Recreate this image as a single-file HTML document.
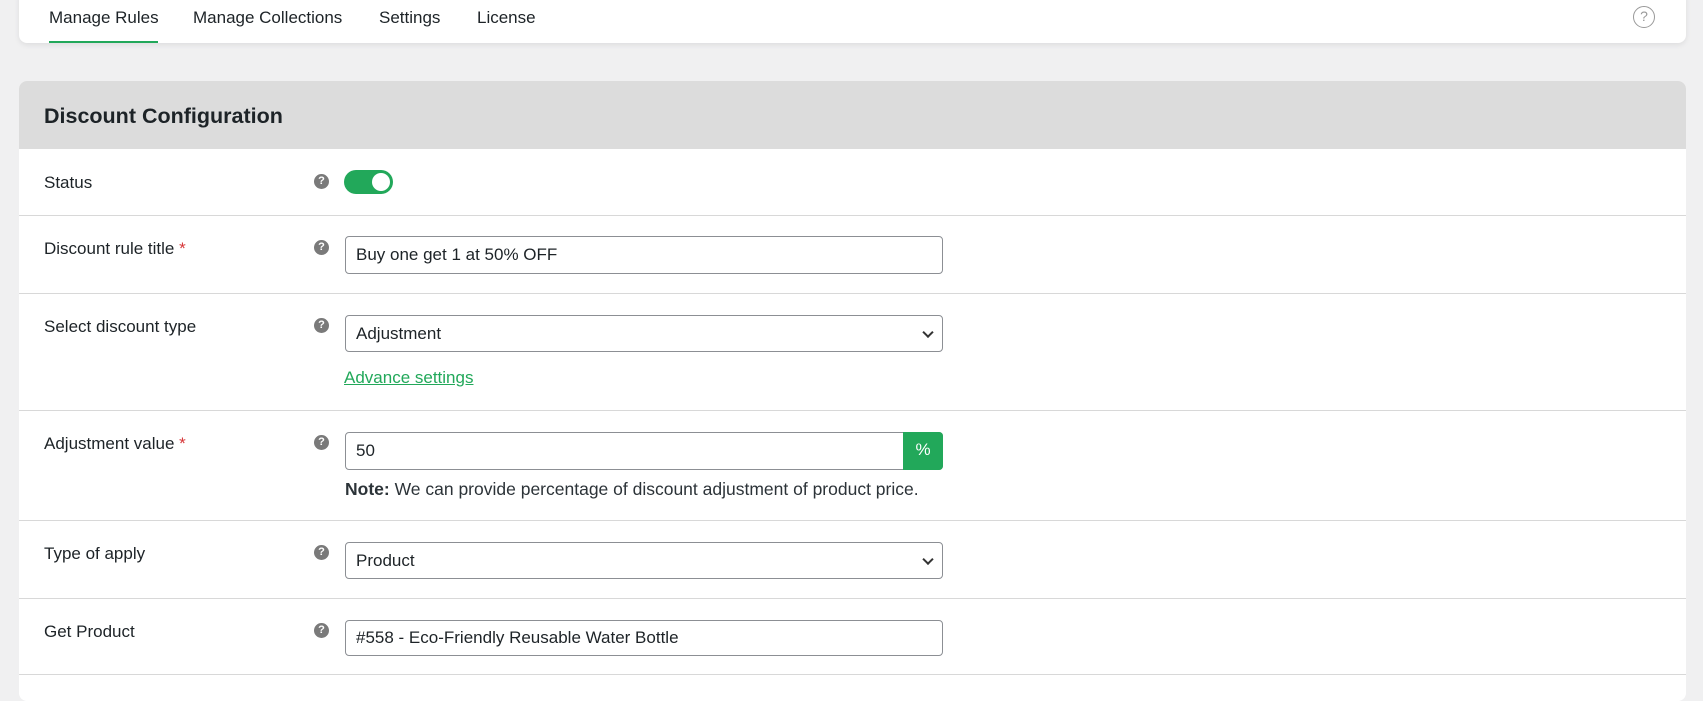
<!DOCTYPE html>
<html><head><style>
*{box-sizing:border-box;margin:0;padding:0}
body{width:1703px;height:677px;overflow:hidden;background:#f0f0f1;font-family:"Liberation Sans",sans-serif;color:#1d2327;position:relative}
.nav{position:absolute;left:19px;top:-10px;width:1667px;height:53px;background:#fff;border-radius:8px;box-shadow:0 2px 6px rgba(0,0,0,.08)}
.tab{position:absolute;top:8px;font-size:17px;color:#1d2327}
.ul{position:absolute;left:49px;top:41px;width:109px;height:2px;background:#22a85a}
.hq{position:absolute;left:1633px;top:6px;width:22px;height:22px;border:1.5px solid #999;border-radius:50%;color:#999;font-size:14px;text-align:center;line-height:19px}
.panel{position:absolute;left:19px;top:81px;width:1667px;height:620px;background:#fff;border-radius:8px;overflow:hidden}
.hd{height:68px;background:#dcdcdc;padding-left:25px;font-size:21.5px;font-weight:bold;line-height:70px;color:#1d2327}
.row{position:absolute;left:0;width:100%;border-top:1px solid #d8d8d8}
.lbl{position:absolute;left:25px;font-size:17px}
.req{color:#d63638}
.help{position:absolute;left:295px;width:15px;height:15px;border-radius:50%;background:#7a7a7a;color:#fff;font-size:11px;font-weight:bold;text-align:center;line-height:15px}
.inp{position:absolute;left:326px;width:598px;border:1px solid #8c8f94;border-radius:4px;font-size:17px;padding-left:10px;background:#fff}
.chev{position:absolute;right:10px;top:50%;width:8px;height:8px;border-right:2px solid #333;border-bottom:2px solid #333;transform:translateY(-70%) rotate(45deg)}
</style></head><body>
<div class="nav"></div>
<div class="tab" style="left:49px">Manage Rules</div>
<div class="tab" style="left:193px">Manage Collections</div>
<div class="tab" style="left:379px">Settings</div>
<div class="tab" style="left:477px">License</div>
<div class="ul"></div>
<div class="hq">?</div>
<div class="panel">
<div class="hd">Discount Configuration</div>
<div class="lbl" style="top:92px">Status</div>
<div class="help" style="top:93px">?</div>
<div style="position:absolute;left:325px;top:89px;width:49px;height:24px;border-radius:12px;background:#22a85a"><div style="position:absolute;right:3px;top:3px;width:18px;height:18px;border-radius:50%;background:#fff"></div></div>
<div class="row" style="top:134px"></div>
<div class="lbl" style="top:158px">Discount rule title <span class="req">*</span></div>
<div class="help" style="top:159px">?</div>
<div class="inp" style="top:155px;height:38px;line-height:36px">Buy one get 1 at 50% OFF</div>
<div class="row" style="top:212px"></div>
<div class="lbl" style="top:236px">Select discount type</div>
<div class="help" style="top:237px">?</div>
<div class="inp" style="top:234px;height:37px;line-height:35px">Adjustment<span class="chev"></span></div>
<div style="position:absolute;left:325px;top:287px;font-size:17px;color:#22a85a;text-decoration:underline">Advance settings</div>
<div class="row" style="top:329px"></div>
<div class="lbl" style="top:353px">Adjustment value <span class="req">*</span></div>
<div class="help" style="top:354px">?</div>
<div class="inp" style="top:351px;height:38px;line-height:36px">50<span style="position:absolute;right:-1px;top:-1px;width:40px;height:38px;background:#22a85a;color:#fff;text-align:center;border-radius:0 4px 4px 0">%</span></div>
<div style="position:absolute;left:326px;top:398px;font-size:17.5px;color:#2c3338"><b>Note:</b> We can provide percentage of discount adjustment of product price.</div>
<div class="row" style="top:439px"></div>
<div class="lbl" style="top:463px">Type of apply</div>
<div class="help" style="top:464px">?</div>
<div class="inp" style="top:461px;height:37px;line-height:35px">Product<span class="chev"></span></div>
<div class="row" style="top:517px"></div>
<div class="lbl" style="top:541px">Get Product</div>
<div class="help" style="top:542px">?</div>
<div class="inp" style="top:539px;height:36px;line-height:34px">#558 - Eco-Friendly Reusable Water Bottle</div>
<div class="row" style="top:593px"></div>
</div>
</body></html>
